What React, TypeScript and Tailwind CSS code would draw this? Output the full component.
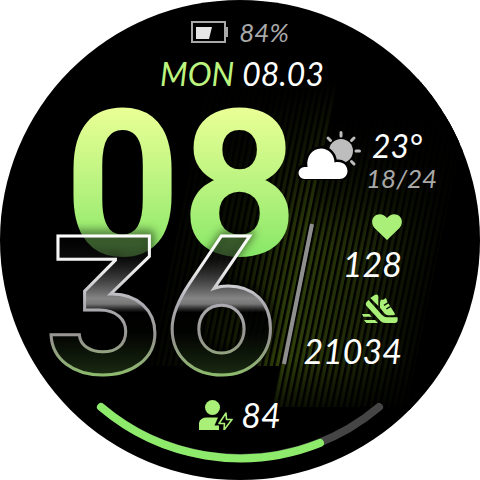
function StripedBackdrop() {
  return (
    <svg className="absolute inset-0 h-full w-full" viewBox="0 0 480 480" aria-hidden="true">
      <defs>
        <linearGradient id="panelLeft">
          <stop offset="0" stopColor="#263408" stopOpacity="0.1" />
          <stop offset="0.5" stopColor="#263408" stopOpacity="0.4" />
          <stop offset="1" stopColor="#32430b" />
        </linearGradient>
        <linearGradient id="panelRight">
          <stop offset="0" stopColor="#32430b" />
          <stop offset="0.5" stopColor="#2a390a" stopOpacity="0.7" />
          <stop offset="1" stopColor="#263408" stopOpacity="0.1" />
        </linearGradient>
        <linearGradient id="verticalFade" x1="0" y1="0" x2="0" y2="1">
          <stop offset="0" stopColor="#000" />
          <stop offset="0.45" stopColor="#000" stopOpacity="0.1" />
          <stop offset="0.85" stopColor="#000" stopOpacity="0" />
          <stop offset="1" stopColor="#000" stopOpacity="0.75" />
        </linearGradient>
        <linearGradient id="rightFade" x1="0" y1="0" x2="0" y2="1">
          <stop offset="0" stopColor="#000" />
          <stop offset="1" stopColor="#000" stopOpacity="0" />
        </linearGradient>
        <pattern id="gaps" width="6" height="20" patternUnits="userSpaceOnUse">
          <rect width="2.500" height="20" fill="#000" />
        </pattern>
      </defs>
      <g transform="skewX(-11.6)">
        <rect x="225" y="80" width="130" height="286" fill="url(#panelLeft)" />
        <rect x="355" y="120" width="135" height="287" fill="url(#panelRight)" />
        <rect x="355" y="119" width="135" height="130" fill="url(#rightFade)" />
        <rect x="215" y="80" width="280" height="330" fill="url(#gaps)" />
      </g>
      <rect x="100" y="79" width="360" height="330" fill="url(#verticalFade)" />
    </svg>
  );
}

function BatteryIcon() {
  return (
    <svg className="h-[22px] w-[38px]" viewBox="0 0 38 22" aria-hidden="true">
      <rect x="1" y="1" width="33" height="20" fill="none" stroke="#a9a9a9" strokeWidth="2" />
      <rect x="34" y="6" width="3" height="10" fill="#a9a9a9" />
      <path d="M5 6H21L18 18H5Z" fill="#e6e6e6" />
    </svg>
  );
}

function WeatherIcon() {
  return (
    <svg className="h-[50px] w-[64px]" viewBox="0 0 64 50" aria-hidden="true">
      <circle cx="43" cy="21" r="12" fill="#bdbdbd" />
      <path d="M43 2.500V6M30 8L32.500 10.500M56 8L53.500 10.500M58 21H61.500M53.500 31.500L56 34" stroke="#bdbdbd" strokeWidth="3" strokeLinecap="round" fill="none" />
      <path
        d="M6.500 49A6 6 0 0 1 6.500 37H9.500C8 27 14 18.500 23 18.500C31 18.500 36.500 25 36.500 32.500C44 30.500 49.500 35 49.500 41C49.500 45.500 46 49 41.500 49Z"
        fill="#fff"
        stroke="#000"
        strokeWidth="5"
        paintOrder="stroke"
      />
    </svg>
  );
}

function HeartIcon() {
  return (
    <svg className="h-[26px] w-[30px]" viewBox="0 0 30 26" fill="#a9ef78" aria-hidden="true">
      <path d="M15 26L2.500 14C-0.500 10.500-0.700 5.500 2.200 2.500C5.600-0.900 11.500-0.800 15 4C18.500-0.800 24.400-0.900 27.800 2.500C30.700 5.500 30.500 10.500 27.500 14Z" />
    </svg>
  );
}

function ShoeIcon() {
  return (
    <svg className="h-[29px] w-[36px]" viewBox="0 0 108 87" fill="#a9ef78" aria-hidden="true">
      <path d="M20 18L60 63Q67 70 76 70H107V78Q107 87 98 87H70Q61 87 55 81L13 35Q9 30 13 25Z" />
      <path d="M25 12L38 3Q44 -1 48 4Q50 8 49 14V36Z" />
      <path d="M54 41V26Q55 15 61 17Q67 18 70 12Q75 14 75 22L98 58Q100 64 95 64H78Q72 64 67 58Z" />
      <path d="M79 26L66 34M86 37L73 45" stroke="#0a0d03" strokeWidth="4" />
      <path d="M0 60H22L29 68H4ZM6 78H39L48 87H13Z" />
    </svg>
  );
}

function EnergyIcon() {
  return (
    <svg className="h-[30px] w-[34px]" viewBox="0 0 34 30" fill="#a9ef78" aria-hidden="true">
      <circle cx="13.500" cy="7.500" r="7.500" />
      <path d="M0 30V23Q1 17.500 8 17.500H19L15.500 25.500H20V30Z" />
      <path d="M27 13L20 23.500H25.500L25 30L33 19.500H27.500Z" fill="#000" stroke="#a9ef78" strokeWidth="1.600" strokeLinejoin="round" />
    </svg>
  );
}

function Minutes() {
  return (
    <svg
      className="relative -mt-[35px] h-[160px] w-[236px] overflow-visible drop-shadow-[2px_-3px_5px_rgba(0,0,0,0.85)]"
      viewBox="0 0 236 160"
    >
      <defs>
        <linearGradient id="glassFill" gradientUnits="userSpaceOnUse" x1="0" y1="8" x2="0" y2="150">
          <stop offset="0" stopColor="#000" stopOpacity="0.35" />
          <stop offset="0.18" stopColor="#161616" stopOpacity="0.5" />
          <stop offset="0.46" stopColor="#8c8c8c" stopOpacity="0.95" />
          <stop offset="0.5" stopColor="#7c7c7c" stopOpacity="0.95" />
          <stop offset="0.56" stopColor="#000" stopOpacity="0.7" />
          <stop offset="0.7" stopColor="#030502" stopOpacity="0.8" />
          <stop offset="1" stopColor="#1a2b12" />
        </linearGradient>
        <linearGradient id="glassEdge" gradientUnits="userSpaceOnUse" x1="0" y1="8" x2="0" y2="150">
          <stop offset="0" stopColor="#fff" />
          <stop offset="0.25" stopColor="#ededed" />
          <stop offset="0.5" stopColor="#adabb2" />
          <stop offset="0.75" stopColor="#96948e" />
          <stop offset="1" stopColor="#8dba6c" />
        </linearGradient>
      </defs>
      <text
        x="-12"
        y="148"
        className="font-['Inter',sans-serif] text-[188px] font-bold [font-feature-settings:'cv09','cv03','ss01']"
        fill="url(#glassFill)"
        stroke="url(#glassEdge)"
        strokeWidth="3"
      >
        36
      </text>
    </svg>
  );
}

function ProgressArc() {
  return (
    <svg className="absolute inset-0 h-full w-full" viewBox="0 0 480 480" fill="none" strokeWidth="8" strokeLinecap="round" role="img" aria-label="Energy level">
      <path d="M101 407A215 215 0 0 0 379 407" stroke="#454545" />
      <path d="M101 407A215 215 0 0 0 320 443" stroke="#8eea6b" />
    </svg>
  );
}

export default function App() {
  return (
    <main className="bg-white font-['Lato',sans-serif] text-white">
      <div className="relative mx-auto flex aspect-square w-full max-w-[480px] flex-col items-center overflow-hidden rounded-full bg-black pt-4">
        <StripedBackdrop />
        <ProgressArc />

        <header className="relative flex flex-col items-center gap-2">
          <div className="flex items-center gap-2.5 text-[26px] leading-8 text-[#a9a9a9] italic">
            <BatteryIcon />
            <span>84%</span>
          </div>
          <div className="flex gap-2 pl-1 text-[32px] leading-9 italic">
            <span className="text-[#bdf47f]">MON</span>
            <span>08.03</span>
          </div>
        </header>

        <section className="relative flex w-full pl-[54px]">
          <div className="w-[236px] shrink-0">
            <div className="ml-2.5 w-max bg-linear-to-b from-[#e9ff96] from-10% via-[#b4f27d] via-60% to-[#84e766] bg-clip-text pt-5 font-['Roboto',sans-serif] text-[204px] leading-[148px] font-bold text-transparent">
              08
            </div>
            <Minutes />
          </div>

          <div className="relative flex flex-col pt-[38px]">
            <div className="flex items-start gap-1 pl-2 italic">
              <WeatherIcon />
              <div className="flex flex-col">
                <span className="pl-1.5 text-[32px] leading-8">23°</span>
                <span className="text-[26px] leading-8 text-[#a9a9a9]">18/24</span>
              </div>
            </div>
            <div className="-ml-2 flex pt-5">
              <svg className="mt-2 h-[144px] w-[32px]" viewBox="0 0 32 144" aria-hidden="true">
                <path d="M30 2L2 142" stroke="#8f8f8f" strokeWidth="4" />
              </svg>
              <div className="flex w-[88px] flex-col items-end text-[34px] leading-9 italic">
                <HeartIcon />
                <span className="pt-1.5">128</span>
                <span className="pt-3 pr-1">
                  <ShoeIcon />
                </span>
                <span className="pt-2.5">21034</span>
              </div>
            </div>
          </div>
        </section>

        <footer className="relative flex items-center gap-2 pt-3 text-[34px] leading-9 italic">
          <EnergyIcon />
          <span>84</span>
        </footer>
      </div>
    </main>
  );
}
